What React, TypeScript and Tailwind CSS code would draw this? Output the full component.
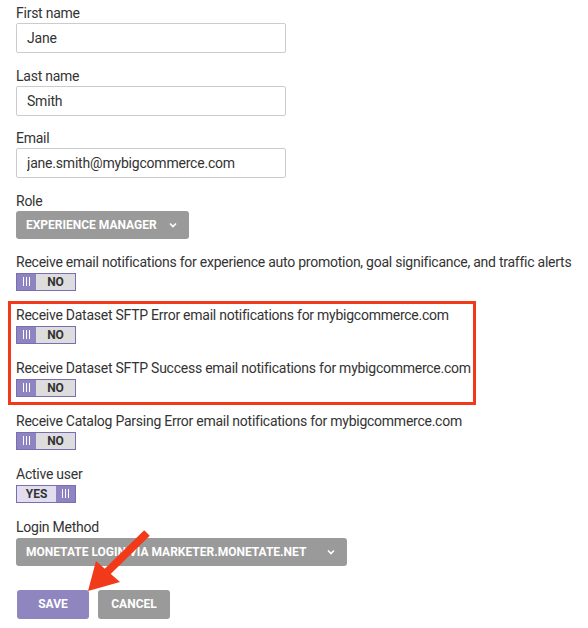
import type { ReactNode } from "react";

function Label({ children, tall }: { children: ReactNode; tall?: boolean }) {
  return (
    <div className={`whitespace-nowrap text-sm tracking-[-0.25px] text-[#333] ${tall ? "leading-[21px]" : "leading-5"}`}>
      {children}
    </div>
  );
}

function TextField({ label, value }: { label: string; value: string }) {
  return (
    <div className="mb-[12.5px]">
      <Label>{label}</Label>
      <input
        readOnly
        value={value}
        className="h-[30px] w-[270px] rounded-[2px] border border-[#cccccc] bg-white px-[10px] text-sm tracking-[-0.2px] text-[#333] outline-none"
      />
    </div>
  );
}

function Bars() {
  return (
    <span className="flex h-full w-[19px] items-center justify-center gap-[2px] bg-[#8f84c2]">
      <span className="h-[9px] w-px bg-white" />
      <span className="h-[9px] w-px bg-white" />
      <span className="h-[9px] w-px bg-white" />
    </span>
  );
}

function Toggle({ on }: { on?: boolean }) {
  return (
    <div className="flex h-[18px] w-[60px] overflow-hidden border border-[#7a6db4] text-xs font-bold text-[#333]">
      {on ? (
        <>
          <span className="flex flex-1 items-center justify-center bg-[#e2def0]">YES</span>
          <Bars />
        </>
      ) : (
        <>
          <Bars />
          <span className="flex flex-1 items-center justify-center bg-[#dddddd]">NO</span>
        </>
      )}
    </div>
  );
}

function ToggleField({ label, on, last }: { label: string; on?: boolean; last?: boolean }) {
  return (
    <div className={last ? "" : "mb-[14px]"}>
      <Label tall>{label}</Label>
      <Toggle on={on} />
    </div>
  );
}

function Chevron() {
  return (
    <svg width="8" height="6" viewBox="0 0 8 6" className="shrink-0">
      <path d="M1 1.5 L4 4.5 L7 1.5" fill="none" stroke="white" strokeWidth="1.6" />
    </svg>
  );
}

function Select({ value, width }: { value: string; width: string }) {
  return (
    <div
      className={`flex h-[28px] items-center justify-between rounded-[3px] bg-[#9a9a9a] pl-[10px] pr-[12px] text-xs font-bold text-white ${width}`}
    >
      <span>{value}</span>
      <Chevron />
    </div>
  );
}

export default function App() {
  return (
    <div className="relative h-[628px] w-[588px] overflow-hidden bg-white font-['Roboto',sans-serif]">
      <div className="pl-4 pt-[3px]">
        <TextField label="First name" value="Jane" />
        <TextField label="Last name" value="Smith" />
        <TextField label="Email" value="jane.smith@mybigcommerce.com" />

        <div className="mb-[13px]">
          <Label>Role</Label>
          <Select value="EXPERIENCE MANAGER" width="w-[173px]" />
        </div>

        <div className="mb-[10px]">
          <Label tall>Receive email notifications for experience auto promotion, goal significance, and traffic alerts</Label>
          <Toggle />
        </div>

        <div className="-ml-2 mb-[6px] w-[468px] border-[3px] border-[#f2391a] pb-[5px] pl-[5px] pt-px">
          <ToggleField label="Receive Dataset SFTP Error email notifications for mybigcommerce.com" />
          <ToggleField label="Receive Dataset SFTP Success email notifications for mybigcommerce.com" last />
        </div>

        <ToggleField label="Receive Catalog Parsing Error email notifications for mybigcommerce.com" />
        <ToggleField label="Active user" on />

        <div>
          <Label tall>Login Method</Label>
          <Select value="MONETATE LOGIN VIA MARKETER.MONETATE.NET" width="w-[331px]" />
        </div>

        <div className="mt-6 flex gap-[9px] pl-px">
          <button className="h-[29px] w-[72px] rounded-[3px] bg-[#8f86bf] text-xs font-bold text-white">SAVE</button>
          <button className="h-[29px] w-[72px] rounded-[3px] bg-[#9a9a9a] text-xs font-bold text-white">CANCEL</button>
        </div>
      </div>

      {/* annotation arrow */}
      <svg className="pointer-events-none absolute left-0 top-0" width="588" height="628">
        <line x1="147" y1="533" x2="106" y2="573" stroke="#f2391a" strokeWidth="8" />
        <polygon points="88,591 96,561 120,582" fill="#f2391a" />
      </svg>
    </div>
  );
}
